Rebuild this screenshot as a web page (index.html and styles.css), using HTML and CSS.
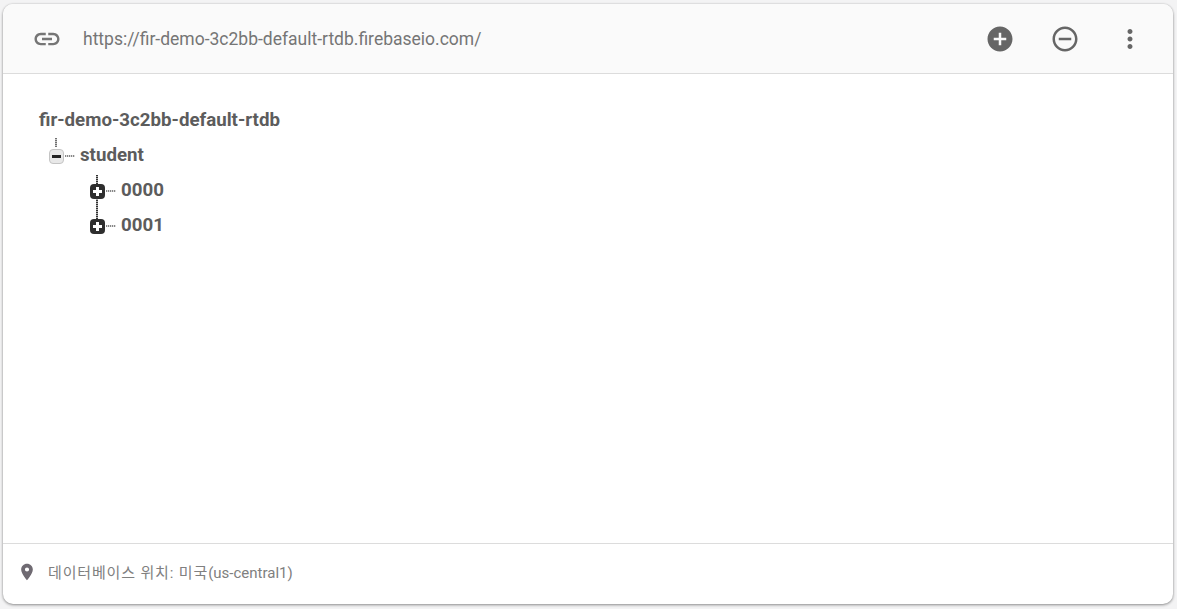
FILE: index.html
```html
<!DOCTYPE html>
<html lang="ko">
<head>
<meta charset="utf-8">
<title>Realtime Database</title>
<link rel="stylesheet" href="styles.css">
</head>
<body>
<main class="card">
  <header class="toolbar">
    <svg class="link-icon" viewBox="0 0 24 24" width="30" height="30"><path d="M3.9 12c0-1.71 1.39-3.1 3.1-3.1h4V7H7c-2.76 0-5 2.24-5 5s2.24 5 5 5h4v-1.9H7c-1.71 0-3.1-1.39-3.1-3.1zM8 13h8v-2H8v2zm9-6h-4v1.9h4c1.71 0 3.1 1.39 3.1 3.1s-1.39 3.1-3.1 3.1h-4V17h4c2.76 0 5-2.24 5-5s-2.24-5-5-5z"/></svg>
    <span class="url">https://fir-demo-3c2bb-default-rtdb.firebaseio.com/</span>
    <div class="actions">
      <svg viewBox="0 0 24 24" width="30" height="30"><path d="M12 2C6.48 2 2 6.48 2 12s4.48 10 10 10 10-4.48 10-10S17.52 2 12 2zm5 11h-4v4h-2v-4H7v-2h4V7h2v4h4v2z"/></svg>
      <svg viewBox="0 0 24 24" width="30" height="30"><path d="M7 11v2h10v-2H7zm5-9C6.48 2 2 6.48 2 12s4.48 10 10 10 10-4.48 10-10S17.52 2 12 2zm0 18c-4.41 0-8-3.59-8-8s3.59-8 8-8 8 3.59 8 8-3.59 8-8 8z"/></svg>
      <svg viewBox="0 0 24 24" width="30" height="30"><path d="M12 8c1.1 0 2-.9 2-2s-.9-2-2-2-2 .9-2 2 .9 2 2 2zm0 2c-1.1 0-2 .9-2 2s.9 2 2 2 2-.9 2-2-.9-2-2-2zm0 6c-1.1 0-2 .9-2 2s.9 2 2 2 2-.9 2-2-.9-2-2-2z"/></svg>
    </div>
  </header>
  <section class="tree">
    <div class="row"><span class="label">fir-demo-3c2bb-default-rtdb</span></div>
    <div class="row level-1">
      <span class="toggle open"><span class="bar"></span></span><span class="dash"></span>
      <span class="label">student</span>
    </div>
    <div class="row level-2">
      <span class="toggle closed"><span class="bar"></span><span class="bar vertical"></span></span><span class="dash"></span>
      <span class="label">0000</span>
    </div>
    <div class="row level-2 tall-line">
      <span class="toggle closed"><span class="bar"></span><span class="bar vertical"></span></span><span class="dash"></span>
      <span class="label">0001</span>
    </div>
  </section>
  <footer class="footer">
    <svg class="pin" viewBox="0 0 24 24" width="20" height="20"><path d="M12 2C8.13 2 5 5.13 5 9c0 5.25 7 13 7 13s7-7.75 7-13c0-3.87-3.13-7-7-7zm0 9.5a2.5 2.5 0 0 1 0-5 2.5 2.5 0 0 1 0 5z"/></svg>
    <span class="location"><span class="hangul">데이터베이스 위치: 미국</span>(us-central1)</span>
  </footer>
</main>
</body>
</html>
```
FILE: styles.css
```css
* { box-sizing: border-box; }
html, body { height: 100%; }
body {
  margin: 0;
  padding: 4px 4px 5px 3px;
  background: #f3f3f4;
  font-family: Roboto, "Noto Sans CJK KR", sans-serif;
}
.card {
  height: 100%;
  display: flex;
  flex-direction: column;
  background: #fff;
  border-radius: 10px;
  box-shadow: 0 1px 3px rgba(0,0,0,.4), 0 0 2px rgba(0,0,0,.12);
  overflow: hidden;
}
.toolbar {
  height: 70px;
  flex: none;
  display: flex;
  align-items: center;
  padding: 0 28px 0 29px;
  background: #fafafa;
  border-bottom: 1px solid #dcdcdc;
}
.link-icon { fill: #757575; flex: none; }
.url {
  margin-left: 21px;
  font-size: 17.5px;
  color: #757575;
}
.actions {
  margin-left: auto;
  display: flex;
  gap: 35px;
}
.actions svg { fill: #666; display: block; }
.tree {
  flex: 1;
  padding: 28px 0 0 36px;
}
.row {
  height: 35px;
  display: flex;
  align-items: center;
}
.level-1 { margin-left: 10px; }
.level-2 { margin-left: 51px; }
.label {
  font-size: 18.7px;
  font-weight: 700;
  color: #5c5c5c;
}
.toggle {
  position: relative;
  width: 15px;
  height: 15px;
  margin-top: 3px;
  flex: none;
  border-radius: 4px;
}
.toggle::before {
  content: "";
  position: absolute;
  left: 6px;
  bottom: 15px;
  width: 2px;
  height: 9px;
  background: repeating-linear-gradient(to bottom, #333 0 1px, #aaa 1px 2px);
}
.open::before { left: 5px; bottom: 16px; opacity: .7; }
.tall-line .toggle::before { height: 21px; }
.open { background: #e8e8e8; border: 1px solid #c4c4c4; }
.closed { background: #2e2e2e; }
.bar {
  position: absolute;
  left: 3px;
  top: 6px;
  width: 9px;
  height: 3px;
  background: #fff;
}
.open .bar { left: 2px; top: 5px; background: #222; }
.bar.vertical { left: 6px; top: 3px; width: 3px; height: 9px; }
.dash {
  width: 10px;
  height: 2px;
  margin: 2px 5px 0 1px;
  background: repeating-linear-gradient(to right, #888 0 1px, #ddd 1px 2px);
  flex: none;
}
.footer {
  height: 61px;
  flex: none;
  display: flex;
  align-items: center;
  padding: 0 0 4px 14px;
  border-top: 1px solid #dcdcdc;
}
.pin { fill: #6f6a72; flex: none; }
.location {
  margin: 0 0 2px 11px;
  font-size: 15px;
  color: #808080;
}
.hangul { letter-spacing: .85px; }
```
